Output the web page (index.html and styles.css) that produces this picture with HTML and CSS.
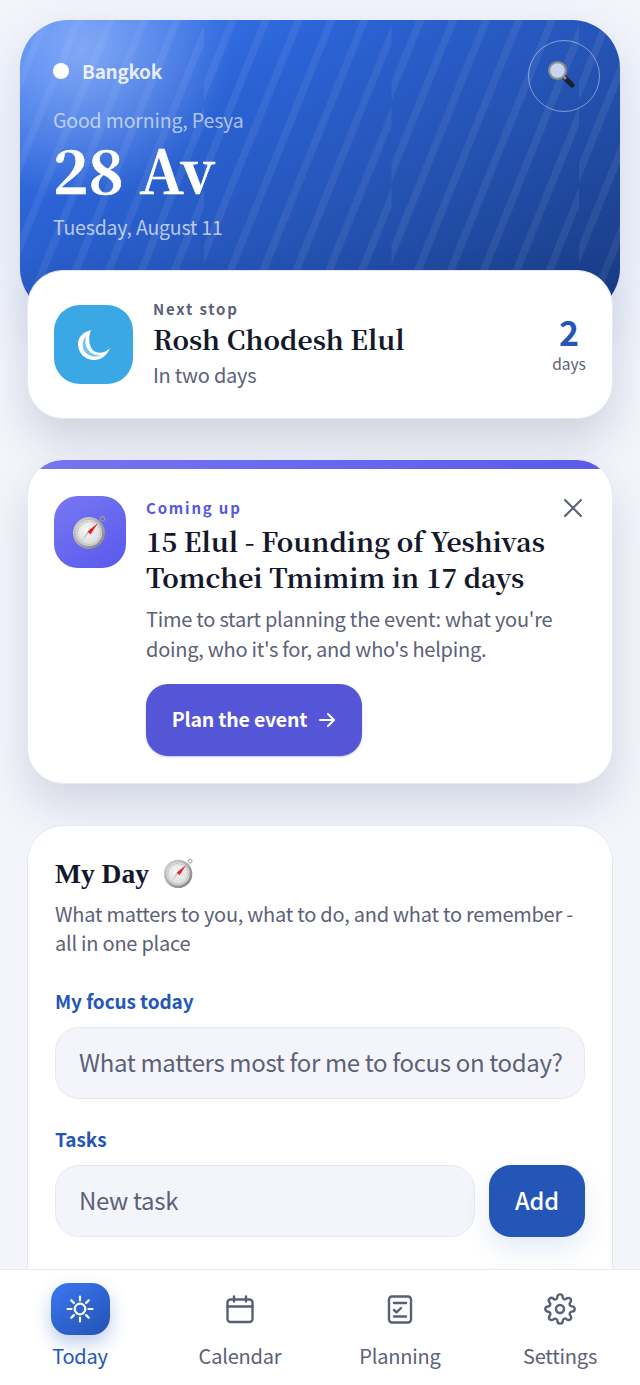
FILE: index.html
```html
<!DOCTYPE html>
<html lang="en">
<head>
<meta charset="utf-8">
<title>Today</title>
<link rel="stylesheet" href="styles.css">
</head>
<body>
<svg class="defs" width="0" height="0" aria-hidden="true">
  <defs>
    <linearGradient id="rim" x1="0" y1="0" x2="1" y2="1"><stop offset="0" stop-color="#d9d9d9"/><stop offset="1" stop-color="#7d7d7d"/></linearGradient>
    <radialGradient id="face" cx=".45" cy=".4" r=".7"><stop offset="0" stop-color="#fafafa"/><stop offset="1" stop-color="#d2d2d2"/></radialGradient>
    <symbol id="compass" viewBox="0 0 36 36">
      <circle cx="30.5" cy="4.8" r="2.2" fill="none" stroke="#9a9a9a" stroke-width="1.1"/>
      <circle cx="17" cy="19" r="16" fill="url(#rim)"/>
      <circle cx="17" cy="19" r="13" fill="url(#face)"/>
      <circle cx="17" cy="19" r="11.6" fill="none" stroke="#b5b5b5" stroke-width="1.4" stroke-dasharray="1 1"/>
      <path d="M17 19 L9 28 L15.5 17.5Z" fill="#c4c4c4"/>
      <path d="M15.5 17.5 L26 9 L18.5 20.5Z" fill="#ee1c25"/>
    </symbol>
  </defs>
</svg>

<main class="page">
  <section class="hero">
    <div class="hero-top">
      <div class="hero-text">
        <div class="location"><span class="dot"></span><span>Bangkok</span></div>
        <p class="greeting">Good morning, Pesya</p>
        <h1 class="hebrew-date">28 Av</h1>
        <p class="civil-date">Tuesday, August 11</p>
      </div>
      <button class="search-btn" aria-label="Search">
        <svg class="search-glyph" width="28" height="28" viewBox="0 0 28 28">
          <path d="M17 17 L25 25" stroke="#1b1f27" stroke-width="5" stroke-linecap="round"/>
          <path d="M16.5 16.5 L19 19" stroke="#8a8a8a" stroke-width="3"/>
          <circle cx="10.5" cy="10.5" r="8.4" fill="#c8d5ee" stroke="#8b8d8a" stroke-width="2.2"/>
        </svg>
      </button>
    </div>
  </section>

  <section class="card next-card">
    <div class="moon-tile">
      <svg width="32" height="30" viewBox="0 0 32 30">
        <path d="M13 0 C5 2 0 7 0 14 C0 23 7 30 16 30 C23 30 29 26 32 18 C28 22 23 24 18 22 C12 20 9 10 13 0Z" fill="#fff"/>
        <path d="M8 6 C3.500 11 3.500 19 8 23 C12 27 18 27.500 23 25 C17 26 12 23 9 18 C7 14 7 10 8 6Z" fill="#7cc4ec"/>
      </svg>
    </div>
    <div class="next-body">
      <div class="eyebrow muted">Next stop</div>
      <h2 class="serif-title">Rosh Chodesh Elul</h2>
      <p class="next-sub">In two days</p>
    </div>
    <div class="count">
      <div class="count-num">2</div>
      <div class="count-unit">days</div>
    </div>
  </section>

  <section class="card upcoming-card">
    <div class="upcoming-bar"></div>
    <div class="upcoming-inner">
      <div class="compass-tile"><svg width="36" height="36"><use href="#compass"/></svg></div>
      <div class="upcoming-body">
        <div class="upcoming-head">
          <div class="eyebrow violet">Coming up</div>
          <button class="close-btn" aria-label="Dismiss">
            <svg width="20" height="20" viewBox="0 0 20 20"><path d="M2 2 L18 18 M18 2 L2 18" stroke="#5c6178" stroke-width="2.100" stroke-linecap="round"/></svg>
          </button>
        </div>
        <h2 class="serif-title upcoming-title">15 Elul - Founding of Yeshivas Tomchei Tmimim in 17 days</h2>
        <p class="upcoming-desc">Time to start planning the event: what you're doing, who it's for, and who's helping.</p>
        <button class="plan-btn"><span class="plan-text">Plan the event</span>
          <svg width="18" height="16" viewBox="0 0 18 16"><path d="M2 8 H16 M10 2 L16 8 L10 14" fill="none" stroke="#fff" stroke-width="2" stroke-linecap="round" stroke-linejoin="round"/></svg>
        </button>
      </div>
    </div>
  </section>

  <section class="card day-card">
    <h2 class="day-title">My Day <svg class="day-compass" width="32" height="32"><use href="#compass"/></svg></h2>
    <p class="day-sub">What matters to you, what to do, and what to remember - all in one place</p>
    <label class="field-label focus-label" for="focus">My focus today</label>
    <input class="field" id="focus" placeholder="What matters most for me to focus on today?">
    <label class="field-label tasks-label" for="task">Tasks</label>
    <div class="task-row">
      <input class="field task-field" id="task" placeholder="New task">
      <button class="add-btn">Add</button>
    </div>
  </section>
</main>

<nav class="tabbar">
  <a class="tab active">
    <span class="tab-icon">
      <svg width="30" height="30" viewBox="0 0 30 30" fill="none" stroke="#fff" stroke-width="2.200" stroke-linecap="round">
        <circle cx="15" cy="15" r="5.300"/>
        <path d="M15 2.500V6.500M15 23.500V27.500M2.500 15H6.500M23.500 15H27.500M6.200 6.200L8.900 8.900M21.100 21.100L23.800 23.800M23.800 6.200L21.100 8.900M8.900 21.100L6.200 23.800"/>
      </svg>
    </span>
    <span class="tab-label">Today</span>
  </a>
  <a class="tab">
    <span class="tab-icon">
      <svg width="30" height="30" viewBox="0 0 30 30" fill="none" stroke="#5a5f75" stroke-width="2.400" stroke-linecap="round" stroke-linejoin="round">
        <rect x="2.500" y="5.500" width="25" height="22.500" rx="3"/>
        <path d="M2.500 12.500H27.500M9 2.500V7.500M21 2.500V7.500"/>
      </svg>
    </span>
    <span class="tab-label">Calendar</span>
  </a>
  <a class="tab">
    <span class="tab-icon">
      <svg width="30" height="30" viewBox="0 0 30 30" fill="none" stroke="#5a5f75" stroke-width="2.400" stroke-linecap="round" stroke-linejoin="round">
        <rect x="4" y="2.500" width="22" height="26" rx="3"/>
        <path d="M9 9H21M9 22.500H21M9 16L11.500 18.300L16 14"/>
      </svg>
    </span>
    <span class="tab-label">Planning</span>
  </a>
  <a class="tab">
    <span class="tab-icon">
      <svg width="32" height="32" viewBox="0 0 24 24" fill="none" stroke="#5a5f75" stroke-width="1.800" stroke-linecap="round" stroke-linejoin="round">
        <circle cx="12" cy="12" r="3"/>
        <path d="M19.400 15a1.650 1.650 0 0 0 .33 1.820l.06.06a2 2 0 1 1-2.830 2.830l-.06-.06a1.650 1.650 0 0 0-1.820-.33 1.650 1.650 0 0 0-1 1.510V21a2 2 0 1 1-4 0v-.09A1.650 1.650 0 0 0 9 19.400a1.650 1.650 0 0 0-1.820.33l-.06.06a2 2 0 1 1-2.830-2.830l.06-.06a1.650 1.650 0 0 0 .33-1.820 1.650 1.650 0 0 0-1.510-1H3a2 2 0 1 1 0-4h.09A1.650 1.650 0 0 0 4.600 9a1.650 1.650 0 0 0-.33-1.820l-.06-.06a2 2 0 1 1 2.830-2.830l.06.06a1.650 1.650 0 0 0 1.820.33H9a1.650 1.650 0 0 0 1-1.510V3a2 2 0 1 1 4 0v.09a1.650 1.650 0 0 0 1 1.510 1.650 1.650 0 0 0 1.820-.33l.06-.06a2 2 0 1 1 2.830 2.830l-.06.06a1.650 1.650 0 0 0-.33 1.820V9a1.650 1.650 0 0 0 1.510 1H21a2 2 0 1 1 0 4h-.09a1.650 1.650 0 0 0-1.510 1z"/>
      </svg>
    </span>
    <span class="tab-label">Settings</span>
  </a>
</nav>
</body>
</html>
```
FILE: styles.css
```css
* { box-sizing: border-box; }
html, body { margin: 0; height: 1385px; overflow: hidden; }
body {
  background: #f3f5fb;
  font-family: "Noto Sans CJK SC", "Noto Sans CJK JP", sans-serif;
  color: #14182b;
}
h1, h2, p { margin: 0; }
button { font: inherit; border: 0; padding: 0; background: none; }
.defs { position: absolute; }

.page { padding-top: 20px; display: flex; flex-direction: column; }

.hero {
  height: 296px;
  margin: 0 20px;
  padding: 20px 20px 0 33px;
  border-radius: 48px;
  color: #fff;
  background-color: #1f4eaa;
  background-image:
    radial-gradient(circle 150px at 62px 30px, rgba(190,210,255,.55), rgba(190,210,255,0)),
    repeating-linear-gradient(112deg, rgba(255,255,255,0) 0 23px, rgba(255,255,255,.065) 23px 30.500px),
    linear-gradient(148deg, #3f7ef5 0%, #2b63d6 30%, #2350ad 65%, #17397f 100%);
  background-size: auto, 187.500px 100%, auto;
  background-position: 0 0, 184px 0, 0 0;
  box-shadow: 0 18px 50px rgba(40,80,170,.18);
}
.hero-top { display: flex; justify-content: space-between; align-items: flex-start; }
.hero-text { padding-top: 11px; }
.location { display: flex; align-items: center; gap: 13px; font-size: 19px; font-weight: 700; letter-spacing: -.3px; line-height: 40px; height: 40px; color: rgba(255,255,255,.85); }
.dot { width: 16px; height: 16px; border-radius: 50%; background: #fff; }
.greeting { font-size: 19.500px; letter-spacing: -.15px; line-height: 30px; margin-top: 14px; color: rgba(255,255,255,.62); }
.hebrew-date { font-family: "Noto Serif CJK SC", "Liberation Serif", serif; font-weight: 700; font-size: 60px; line-height: 66px; letter-spacing: .2px; -webkit-text-stroke: .6px #fff; }
.civil-date { font-size: 19.500px; letter-spacing: -.2px; line-height: 30px; margin-top: 11px; color: rgba(255,255,255,.68); }
.search-btn { width: 72px; height: 72px; border-radius: 50%; border: 1.500px solid rgba(255,255,255,.42); display: flex; align-items: center; justify-content: center; }
.search-glyph { margin: 0 6px 4px 0; }

.card {
  margin: 0 27px;
  background: #fff;
  border: 1px solid #e6e9f3;
  border-radius: 36px;
  position: relative;
}
.next-card {
  margin-top: -46px;
  height: 149px;
  padding: 0 26px;
  display: flex;
  align-items: center;
  gap: 20px;
  box-shadow: 0 22px 44px rgba(30,42,90,.17);
}
.moon-tile { width: 79px; height: 79px; border-radius: 26px; background: #3aa8e4; display: flex; align-items: center; justify-content: center; flex: none; }
.next-body { flex: 1; min-width: 0; }
.eyebrow { font-size: 15px; font-weight: 700; letter-spacing: 1.800px; line-height: 20px; }
.muted { color: #5c6178; }
.violet { color: #5558e0; }
.serif-title { font-family: "Noto Serif CJK SC", "Liberation Serif", serif; font-weight: 700; font-size: 26.500px; line-height: 36px; color: #14182b; }
.next-sub { font-size: 20px; letter-spacing: -.25px; line-height: 30px; color: #5c6178; margin-top: 3px; }
.next-body .serif-title { margin-top: 2px; }
.count { text-align: center; width: 34px; margin-top: -4px; }
.count-num { font-size: 34px; font-weight: 700; line-height: 40px; color: #2456b8; }
.count-unit { font-size: 15.500px; line-height: 22px; color: #5c6178; }

.upcoming-card { margin-top: 40px; height: 325px; overflow: hidden; box-shadow: 0 22px 44px rgba(30,42,90,.15); }
.upcoming-bar { height: 9px; background: linear-gradient(90deg, #7676f0, #5a5aec); }
.upcoming-inner { display: flex; gap: 20px; padding: 27px 26px 0; }
.compass-tile { width: 72px; height: 72px; border-radius: 24px; background: linear-gradient(145deg, #7878f2, #5858ee); display: flex; align-items: center; justify-content: center; flex: none; }
.upcoming-body { flex: 1; min-width: 0; }
.upcoming-head { display: flex; justify-content: space-between; align-items: center; height: 24px; }
.close-btn { display: flex; margin-right: 3px; }
.upcoming-title { margin-top: 3px; }
.upcoming-desc { font-size: 20px; letter-spacing: -.25px; line-height: 30px; color: #5c6178; margin-top: 9px; }
.plan-btn { margin-top: 20px; width: 216px; height: 72px; border-radius: 22px; background: #5555d8; color: #fff; font-size: 19.500px; font-weight: 700; letter-spacing: -.2px; display: flex; align-items: center; justify-content: center; gap: 11px; box-shadow: 0 1px 2px rgba(60,60,160,.3); }
.plan-text { padding-bottom: 3px; }

.day-card { margin-top: 41px; height: 500px; padding: 27px 27px 0; border-bottom: 0; }
.day-title { font-family: "Liberation Serif", serif; font-weight: 700; font-size: 27.500px; line-height: 42px; display: flex; align-items: center; gap: 14px; }
.day-compass { margin-top: -2px; }
.day-sub { font-size: 20px; letter-spacing: -.25px; line-height: 29px; color: #5c6178; margin-top: 4px; }
.field-label { display: block; font-size: 19px; font-weight: 700; letter-spacing: -.1px; line-height: 28px; color: #2456b8; }
.focus-label { margin-top: 30px; }
.tasks-label { margin-top: 26px; }
.field { display: block; width: 100%; height: 72px; margin-top: 12px; padding: 0 10px 4px 23px; border: 1px solid #e6e9f3; border-radius: 24px; background: #f4f5fb; font: inherit; font-size: 24px; letter-spacing: -.35px; color: #14182b; outline: none; }
.field::placeholder { color: #5c6178; opacity: 1; }
.task-row { display: flex; gap: 14px; }
.task-field { flex: 1; min-width: 0; width: auto; }
.add-btn { margin-top: 12px; width: 96px; height: 72px; flex: none; border-radius: 22px; background: #2456b8; color: #fff; font-size: 23.500px; font-weight: 500; padding-bottom: 2px; box-shadow: 0 12px 26px rgba(36,86,184,.12); }

.tabbar {
  position: fixed;
  left: 0; right: 0; bottom: 0;
  height: 116px;
  background: #fff;
  border-top: 1px solid #e8eaf2;
  display: grid;
  grid-template-columns: repeat(4, 1fr);
}
.tab { display: flex; flex-direction: column; align-items: center; padding-top: 13px; color: #5c6178; }
.tab-icon { width: 59px; height: 52px; display: flex; align-items: center; justify-content: center; }
.active .tab-icon { border-radius: 18px; background: linear-gradient(145deg, #3a78f0, #2452b4); box-shadow: 0 8px 18px rgba(36,86,184,.3); }
.active { color: #2456b8; }
.tab-label { font-size: 20px; letter-spacing: -.2px; line-height: 30px; margin-top: 6px; }
```
